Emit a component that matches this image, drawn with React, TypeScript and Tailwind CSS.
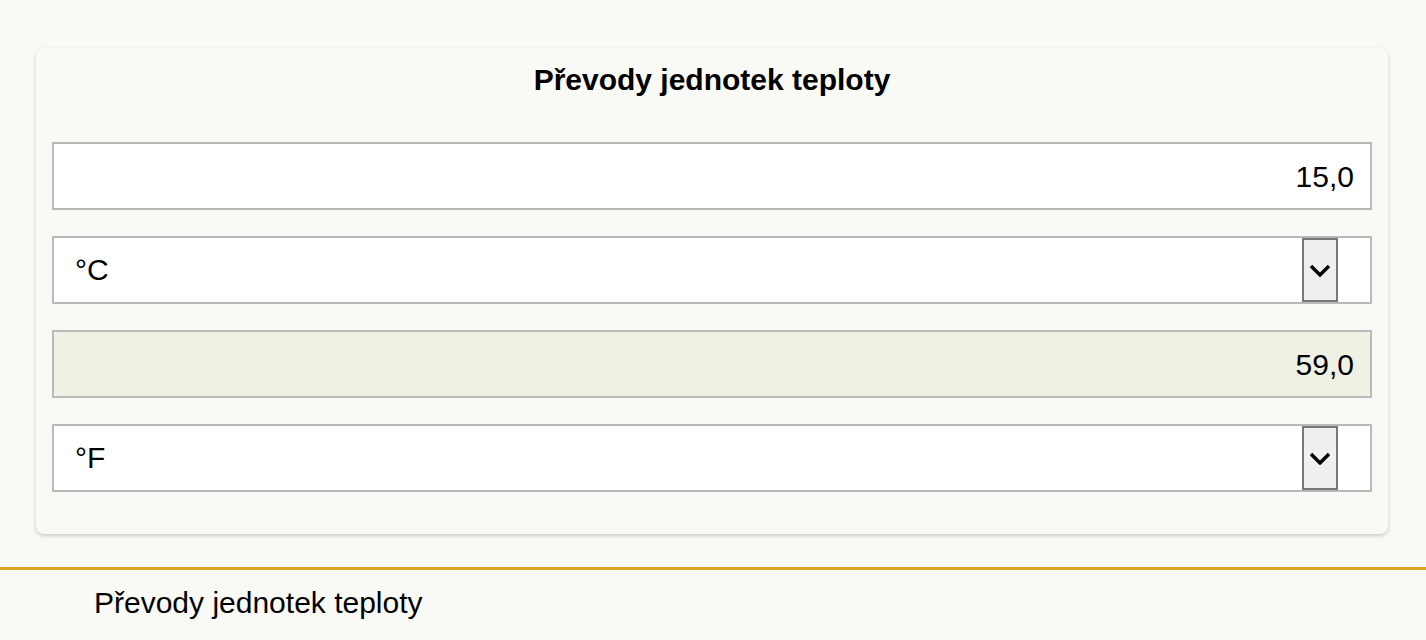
import React from 'react';

const font = { fontFamily: '"Liberation Sans", Arial, sans-serif' };

const Chevron = () => (
  <svg width="22" height="13" viewBox="0 0 22 13" className="block">
    <polyline points="2,2 11,11 20,2" fill="none" stroke="#000" strokeWidth="3.4" strokeLinejoin="miter" />
  </svg>
);

const UnitSelect = ({ label }: { label: string }) => (
  <div className="flex h-[68px] items-center border-2 border-[#b9b9b9] bg-white pl-[21px] pr-[32px]">
    <span className="flex-1 text-[30px] leading-none text-black">{label}</span>
    <div className="flex h-[64px] w-[36px] items-center justify-center border-2 border-[#787878] bg-[#efefef]">
      <Chevron />
    </div>
  </div>
);

export default function App() {
  return (
    <div className="min-h-screen bg-[#f9f9f5] pt-[48px] text-black" style={font}>
      <div className="ml-[36px] mr-[38px] rounded-lg bg-[#f9f9f5] px-[16px] pb-[42px] pt-[15px] shadow-[0_2px_4px_rgba(0,0,0,0.18)]">
        <h1 className="mb-[45px] text-center text-[30px] font-bold leading-[34px]">Převody jednotek teploty</h1>
        <div className="flex flex-col gap-[26px]">
          <div className="flex h-[68px] items-center justify-end border-2 border-[#b9b9b9] bg-white pr-[16px] text-[30px] text-black">
            15,0
          </div>
          <UnitSelect label="°C" />
          <div className="h-[68px] border-2 border-[#b9b9b9] bg-white">
            <div className="flex h-full items-center justify-end rounded-[4px] bg-[#f0f1e5] pr-[16px] text-[30px] text-black">
              59,0
            </div>
          </div>
          <UnitSelect label="°F" />
        </div>
      </div>
      <div className="mt-[33px] border-t-[3px] border-[#daa520] pl-[94px] pt-[16px]">
        <p className="text-[30px] leading-[34px]">Převody jednotek teploty</p>
      </div>
    </div>
  );
}
